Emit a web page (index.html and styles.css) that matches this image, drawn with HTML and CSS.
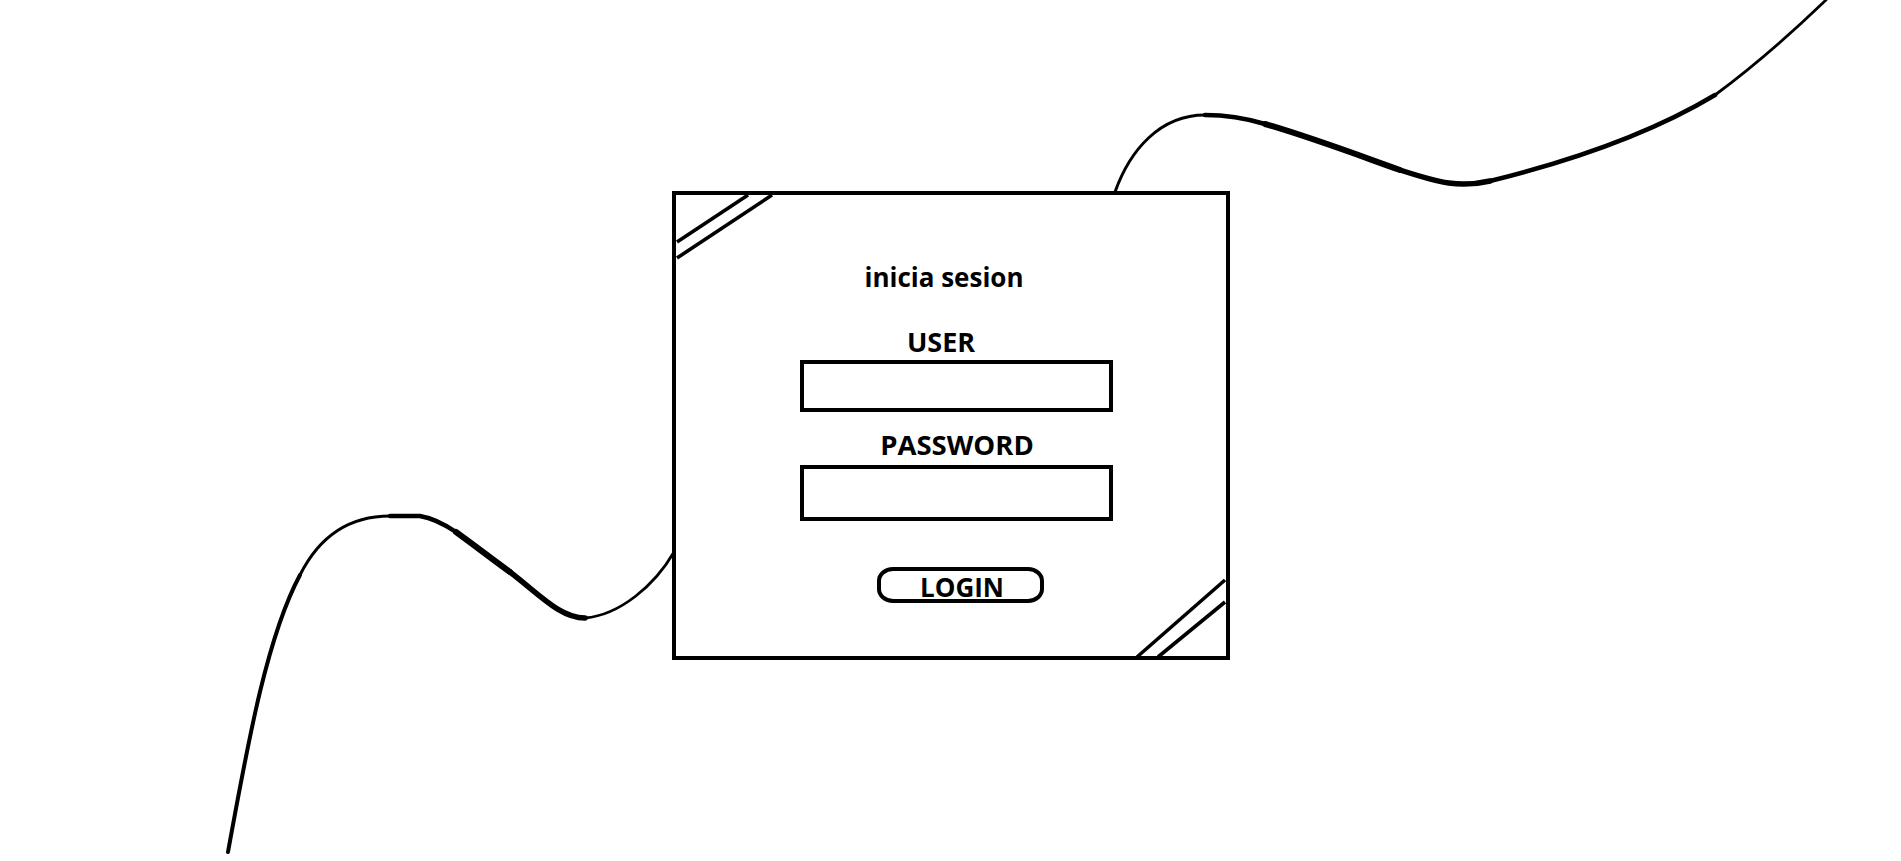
FILE: index.html
```html
<!DOCTYPE html>
<html lang="es">
<head>
<meta charset="utf-8">
<title>inicia sesion</title>
<link rel="stylesheet" href="styles.css">
</head>
<body>
<svg class="scribble" width="1901" height="861" viewBox="0 0 1901 861" aria-hidden="true">
  <g fill="none" stroke="#000" stroke-linecap="round" stroke-linejoin="round">
    <path d="M228 852 C245 760 265 640 300 575" stroke-width="4"/>
    <path d="M300 575 C320 535 350 516 390 516" stroke-width="3"/>
    <path d="M390 516 L420 516 C432 518 444 524 456 532" stroke-width="4.5"/>
    <path d="M456 532 C474 545 492 559 510 572" stroke-width="6"/>
    <path d="M510 572 C540 595 560 618 585 618" stroke-width="5.5"/>
    <path d="M585 618 C620 615 655 585 674 552" stroke-width="2.8"/>
    <path d="M1115 192 C1130 150 1160 115 1205 115" stroke-width="3"/>
    <path d="M1205 115 C1225 115 1245 118 1265 124" stroke-width="4.5"/>
    <path d="M1265 124 C1310 137 1355 154 1400 170" stroke-width="6"/>
    <path d="M1400 170 C1440 183 1460 188 1490 181" stroke-width="5.5"/>
    <path d="M1490 181 C1555 165 1640 140 1715 95" stroke-width="4.5"/>
    <path d="M1715 95 C1765 58 1800 25 1826 0" stroke-width="2.8"/>
  </g>
</svg>
<main class="stage">
  <form class="login-card">
    <svg class="corners" width="550" height="461" viewBox="0 0 550 461" aria-hidden="true">
      <g stroke="#000" stroke-width="3.6" fill="none">
        <line x1="72" y1="0" x2="1" y2="47"/>
        <line x1="96" y1="0" x2="1" y2="63"/>
        <line x1="549" y1="385" x2="461" y2="462"/>
        <line x1="549" y1="407" x2="482" y2="462"/>
      </g>
    </svg>
    <h1 class="title">inicia sesion</h1>
    <label class="label label-user" for="user">USER</label>
    <input class="field field-user" id="user" type="text">
    <label class="label label-pass" for="pass">PASSWORD</label>
    <input class="field field-pass" id="pass" type="password">
    <button class="login-btn" type="button">LOGIN</button>
  </form>
</main>
</body>
</html>
```

FILE: styles.css
```css
html, body {
  margin: 0;
  padding: 0;
  background: #fff;
}

body {
  width: 1901px;
  height: 861px;
  overflow: hidden;
  position: relative;
  font-family: "Open Sans", "Noto Sans", "DejaVu Sans", sans-serif;
  color: #000;
}

.scribble {
  position: absolute;
  left: 0;
  top: 0;
  z-index: 0;
}

.stage {
  position: relative;
  z-index: 1;
  display: flex;
  flex-direction: column;
  align-items: center;
  padding-top: 191px;
}

.login-card {
  position: relative;
  box-sizing: border-box;
  width: 558px;
  height: 469px;
  margin: 0;
  margin-left: 1px;
  border: 4px solid #000;
  background: #fff;
  display: flex;
  flex-direction: column;
  align-items: center;
  padding-top: 67px;
}

.corners {
  position: absolute;
  left: 0;
  top: 0;
  overflow: visible;
}

.title {
  margin: 0 14px 0 0;
  font-size: 26px;
  line-height: 30px;
  font-weight: 700;
}

.label {
  display: block;
  font-size: 27px;
  line-height: 30px;
  font-weight: 700;
}

.label-user {
  margin: 35px 20px 0 0;
}

.label-pass {
  margin: 18px 0 0 12px;
  font-size: 27.5px;
}

.field {
  box-sizing: border-box;
  width: 313px;
  border: 4px solid #000;
  border-radius: 0;
  background: #fff;
  outline: none;
  margin-left: 11px;
  padding: 0;
}

.field-user {
  height: 52px;
  margin-top: 3px;
}

.field-pass {
  height: 56px;
  margin-top: 5px;
}

.login-btn {
  box-sizing: border-box;
  width: 167px;
  height: 36px;
  margin: 46px 0 0 19px;
  padding: 2px 0 0 3px;
  border: 4px solid #000;
  border-radius: 16px / 14px;
  background: #fff;
  font-family: inherit;
  font-size: 26px;
  line-height: 28px;
  font-weight: 700;
  color: #000;
  display: flex;
  justify-content: center;
  align-items: flex-start;
}
```
